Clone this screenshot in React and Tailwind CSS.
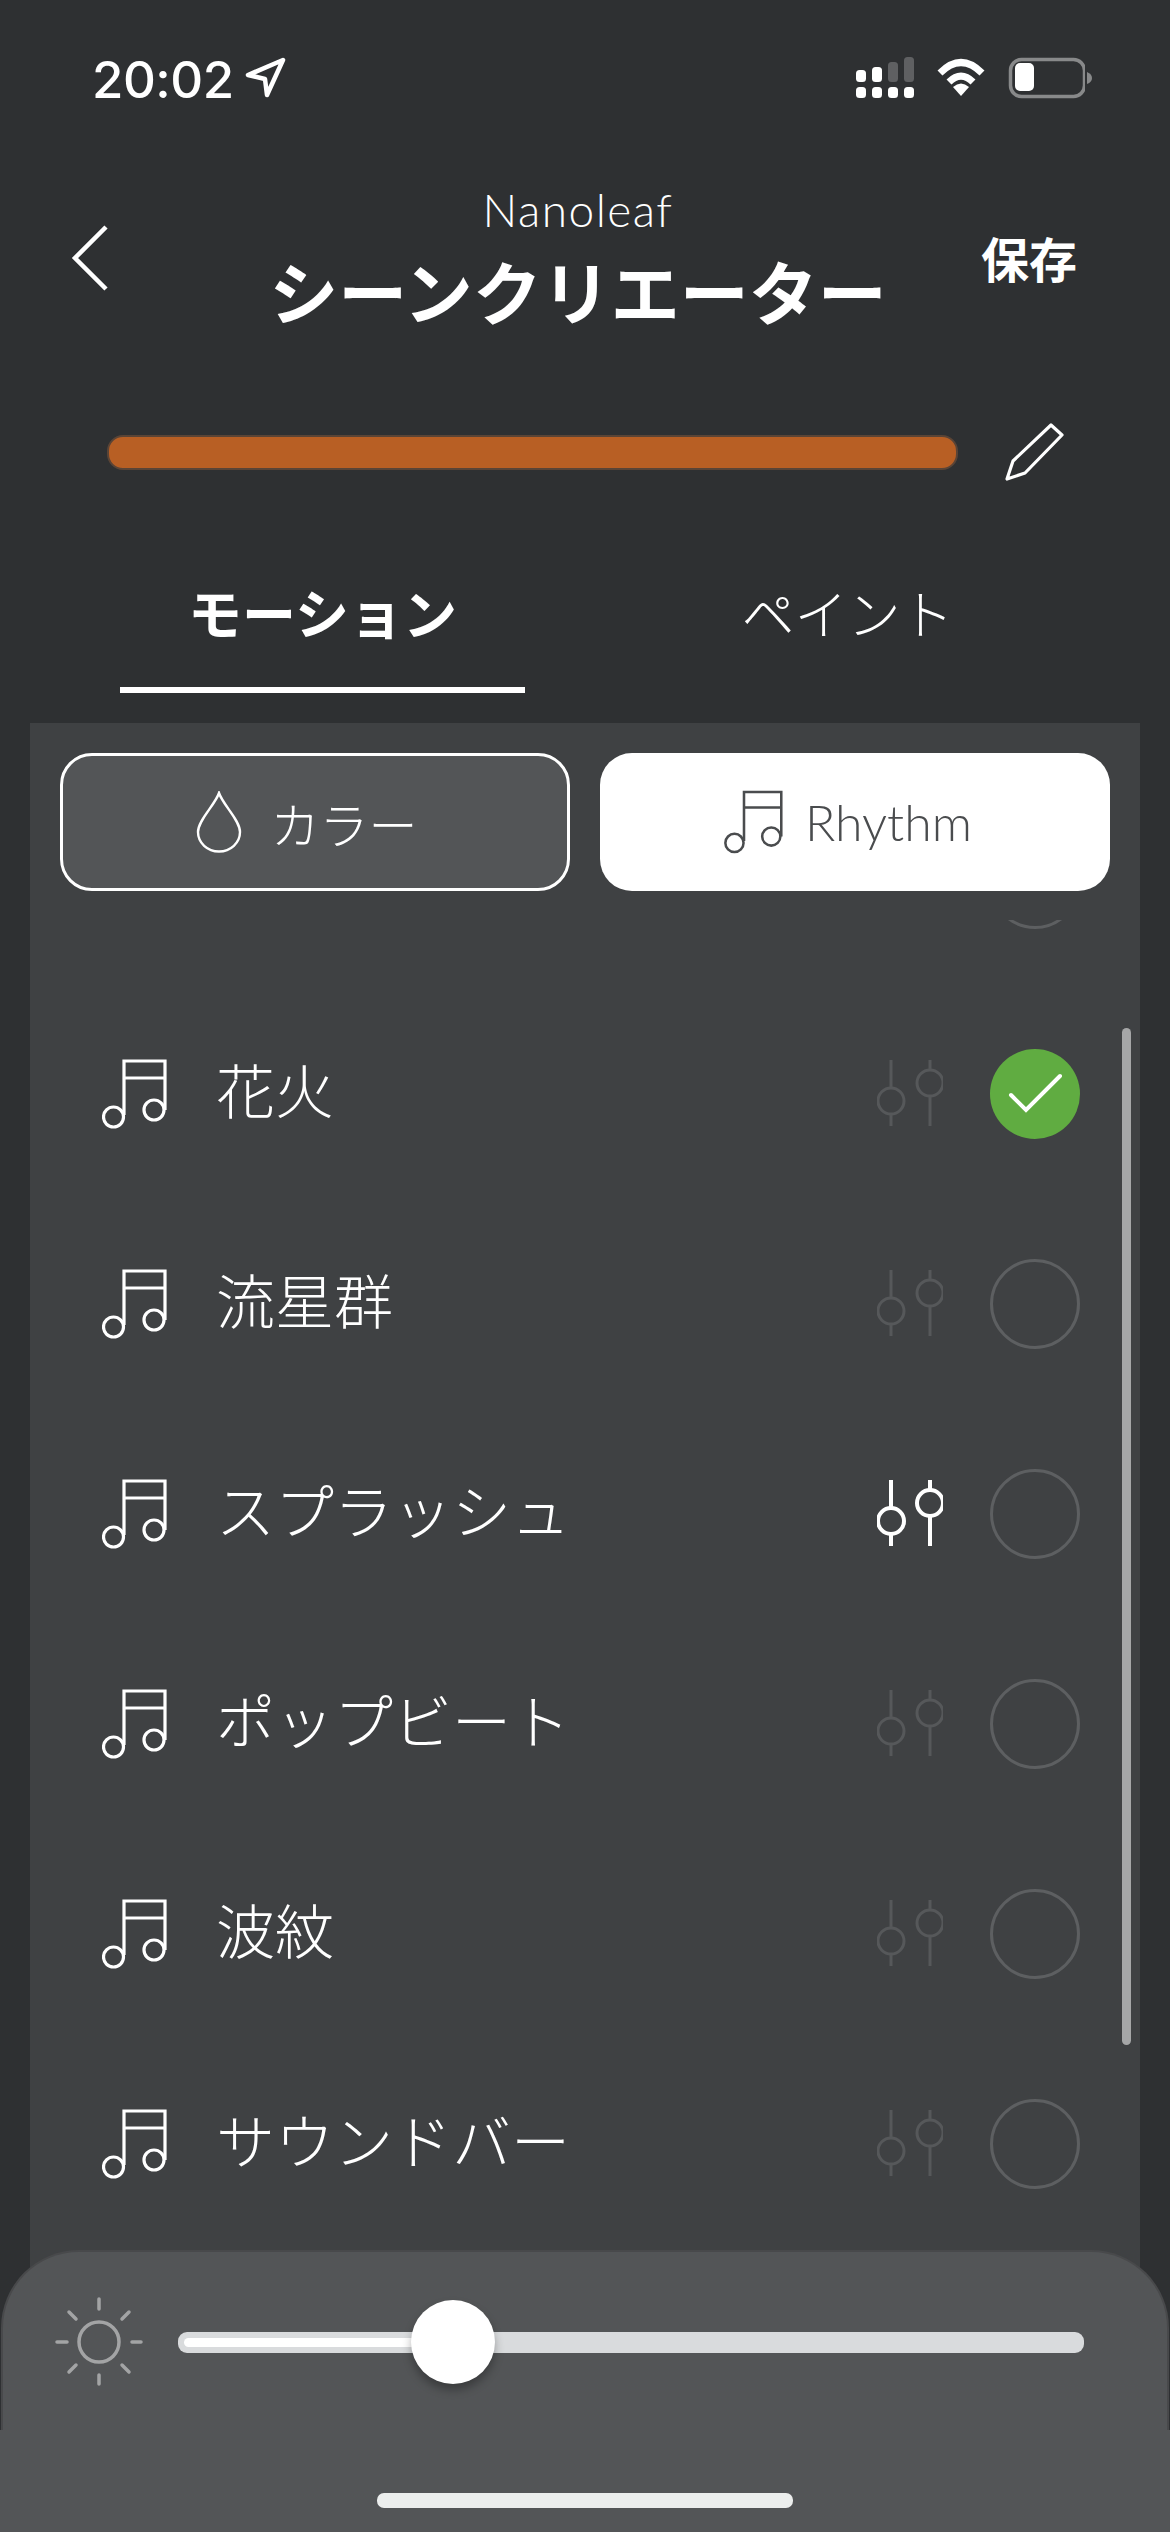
import React from "react";

const Note = ({ className = "" }) => (
  <svg viewBox="0 0 66 70" className={`w-[66px] h-[70px] ${className}`} fill="none" stroke="currentColor" strokeWidth="3.200">
    <circle cx="11.500" cy="58" r="10" />
    <circle cx="52" cy="51" r="10" />
    <path d="M22 56V2H63V51M22 19H63" />
  </svg>
);

const Sliders = ({ active }) => (
  <svg viewBox="0 0 66 68" className={`w-[66px] h-[68px] ${active ? "text-white" : "text-[#56585a]"}`} fill="none" stroke="currentColor" strokeWidth={active ? 4 : 3}>
    <path d="M14 1V29M14 55V67M53 1V11M53 37V67" />
    <circle cx="14" cy="42" r="13" />
    <circle cx="53" cy="24" r="13" />
  </svg>
);

const Row = ({ label, active, selected }) => (
  <div className="h-[210px] flex items-center pl-[72px] pr-[60px]">
    <Note className="text-white mt-[-1px]" />
    <span className="ml-[48px] flex-1 text-[59px] font-light text-white leading-none mt-[-11px]">{label}</span>
    <div className="mr-[47px] mt-[-2px]">
      <Sliders active={active} />
    </div>
    {selected ? (
      <div className="w-[90px] h-[90px] rounded-full bg-[#60ac41] flex items-center justify-center">
        <svg viewBox="0 0 90 90" className="w-[90px] h-[90px]" fill="none" stroke="#ffffff" strokeWidth="4" strokeLinecap="round">
          <path d="M21 46L36 61L70 27" />
        </svg>
      </div>
    ) : (
      <div className="w-[90px] h-[90px] rounded-full border-[3px] border-[#5d5f61]" />
    )}
  </div>
);

export default function App() {
  return (
    <div className="relative w-[1170px] h-[2532px] overflow-hidden bg-[#2e3032] text-white font-['Noto_Sans_CJK_JP','Noto_Sans',sans-serif]">
      {/* status bar */}
      <div className="h-[180px] flex items-start pl-[92px] pr-[77px] pt-[50px]">
        <span className="w-[139px] font-['Inter',sans-serif] font-medium text-[51px] leading-[60px] tracking-[-0.5px] whitespace-nowrap">20:02</span>
        <svg viewBox="0 0 70 60" className="w-[70px] h-[60px] ml-[-1px]" fill="none" stroke="#ffffff" strokeWidth="4.500" strokeLinejoin="round">
          <path d="M53 10L18 25L35 29L37 45Z" />
        </svg>
        <div className="flex-1" />
        <svg viewBox="0 0 235 60" className="w-[235px] h-[60px]">
          <g fill="#ffffff">
            <rect x="6" y="37" width="10" height="11" rx="3.500" />
            <rect x="22" y="37" width="10" height="11" rx="3.500" />
            <rect x="38" y="37" width="10" height="11" rx="3.500" />
            <rect x="54" y="37" width="10" height="11" rx="3.500" />
            <rect x="6" y="20" width="10" height="12" rx="3.500" />
            <rect x="22" y="17" width="10" height="15" rx="3.500" />
            <path d="M111 46L103 37Q111 30 119 37Z" />
          </g>
          <rect x="38" y="12" width="10" height="20" rx="3.500" fill="#5f6062" />
          <rect x="54" y="7" width="10" height="25" rx="3.500" fill="#5f6062" />
          <g fill="none" stroke="#ffffff" strokeWidth="7">
            <path d="M90 23Q111 2 132 23" />
            <path d="M99 32Q111 20 123 32" />
          </g>
          <rect x="160.500" y="9.500" width="74" height="37" rx="11" fill="none" stroke="#88898a" strokeWidth="3.500" />
          <rect x="165" y="13" width="19" height="28" rx="5" fill="#ffffff" />
        </svg>
        <svg viewBox="0 0 6 12" className="w-[6px] h-[12px] mt-[22px] ml-[2px]"><path d="M0 0Q5 2 5 6Q5 10 0 12Z" fill="#88898a" /></svg>
      </div>

      {/* header */}
      <div className="h-[160px] grid grid-cols-[200px_756px_1fr] items-center">
        <svg viewBox="0 0 40 66" className="w-[40px] h-[66px] ml-[70px] mt-[-4px]" fill="none" stroke="#ffffff" strokeWidth="4.500">
          <path d="M36 2L5 33L36 64" />
        </svg>
        <div className="flex flex-col items-center -mt-[5px]">
          <span className="font-['Lato',sans-serif] font-light text-[46px] leading-[50px] tracking-[1.500px]">Nanoleaf</span>
          <span className="text-[69px] font-bold leading-[80px] mt-[15px] whitespace-nowrap">シーンクリエーター</span>
        </div>
        <span className="text-[48px] font-bold leading-none pl-[25px] mt-[-6px]">保存</span>
      </div>

      {/* name bar */}
      <div className="h-[220px] pt-[84px] flex items-start pl-[107px]">
        <div className="w-[851px] h-[35px] mt-[11px] rounded-[16px] bg-[#b85f24] border-2 border-[#5a4436]" />
        <svg viewBox="0 0 90 90" className="w-[90px] h-[90px] ml-[32px] mt-[-14px]" fill="none" stroke="#ffffff" strokeWidth="3.200" strokeLinejoin="round">
          <path d="M61 15L72 25L35 63L17 69L23 51Z" />
        </svg>
      </div>

      {/* tabs */}
      <div className="h-[133px] flex">
        <div className="w-[405px] ml-[120px] h-full border-b-[6px] border-white flex justify-center pt-[17px]">
          <span className="text-[54px] font-bold leading-[70px]">モーション</span>
        </div>
        <div className="flex-1 flex justify-center pt-[17px]">
          <span className="text-[53px] font-light leading-[70px]">ペイント</span>
        </div>
      </div>

      {/* panel */}
      <div className="relative mt-[30px] mx-[30px] h-[1809px] bg-[#3f4143] overflow-hidden">
        <div className="flex gap-[30px] px-[30px] pt-[30px]">
          <div className="w-[510px] h-[138px] rounded-[32px] border-[3px] border-white bg-[#535557] flex items-center justify-center">
            <svg viewBox="0 0 46 62" className="w-[46px] h-[62px]" fill="none" stroke="#ffffff" strokeWidth="2.400">
              <path d="M23 2C19 14 2 29 2 41A21 19.500 0 0 0 44 41C44 29 27 14 23 2Z" />
            </svg>
            <span className="ml-[28px] text-[49px] font-light leading-none mr-[16px]">カラー</span>
          </div>
          <div className="w-[510px] h-[138px] rounded-[32px] bg-white flex items-center justify-center text-[#4a4c4e]">
            <svg viewBox="0 0 66 70" className="w-[60px] h-[64px]" fill="none" stroke="currentColor" strokeWidth="2.800">
              <circle cx="11.500" cy="58" r="10" />
              <circle cx="52" cy="51" r="10" />
              <path d="M22 56V2H63V51M22 19H63" />
            </svg>
            <span className="ml-[21px] mr-[14px] font-['Lato',sans-serif] font-light text-[50px] leading-none">Rhythm</span>
          </div>
        </div>

        <div className="mt-[29px] h-[1400px] overflow-hidden">
          <div className="-mt-[141px]">
            <Row label="" />
            <Row label="花火" selected />
            <Row label="流星群" />
            <Row label="スプラッシュ" active />
            <Row label="ポップビート" />
            <Row label="波紋" />
            <Row label="サウンドバー" />
          </div>
        </div>

        {/* scrollbar */}
        <div className="absolute left-[1092px] top-[305px] w-[9px] h-[1017px] rounded-full bg-[#a5a6a7]" />
      </div>

      {/* brightness sheet */}
      <div className="absolute left-0 right-0 bottom-0 h-[282px] flex flex-col">
        <div className="h-[180px] mx-[1px] rounded-t-[78px] bg-[#535557] border-t-2 border-x-2 border-[#48494b] flex items-start pt-[30px]">
          <svg viewBox="0 0 120 120" className="w-[120px] h-[120px] ml-[37px] shrink-0" fill="none" stroke="#a3a4a5" strokeWidth="3.500" strokeLinecap="round">
            <circle cx="59" cy="60" r="20" />
            <path d="M59 17V27M59 93V102M17 60H27M92 60H101M29 30L36 37M89 30L82 37M29 90L36 83M89 90L82 83" />
          </svg>
          <div className="relative ml-[18px] mt-[50px] w-[906px] h-[21px] rounded-[9px] bg-[#d9dbdd] flex items-center pl-[6px]">
            <div className="w-[240px] h-[9px] rounded-l-full bg-white" />
            <div className="absolute left-[233px] top-[-32px] w-[84px] h-[84px] rounded-full bg-white shadow-[0_6px_10px_rgba(0,0,0,0.3)]" />
          </div>
        </div>
        <div className="flex-1 bg-[#535557] flex justify-center pt-[63px]">
          <div className="w-[416px] h-[15px] rounded-[7px] bg-[#eceeed]" />
        </div>
      </div>
    </div>
  );
}
